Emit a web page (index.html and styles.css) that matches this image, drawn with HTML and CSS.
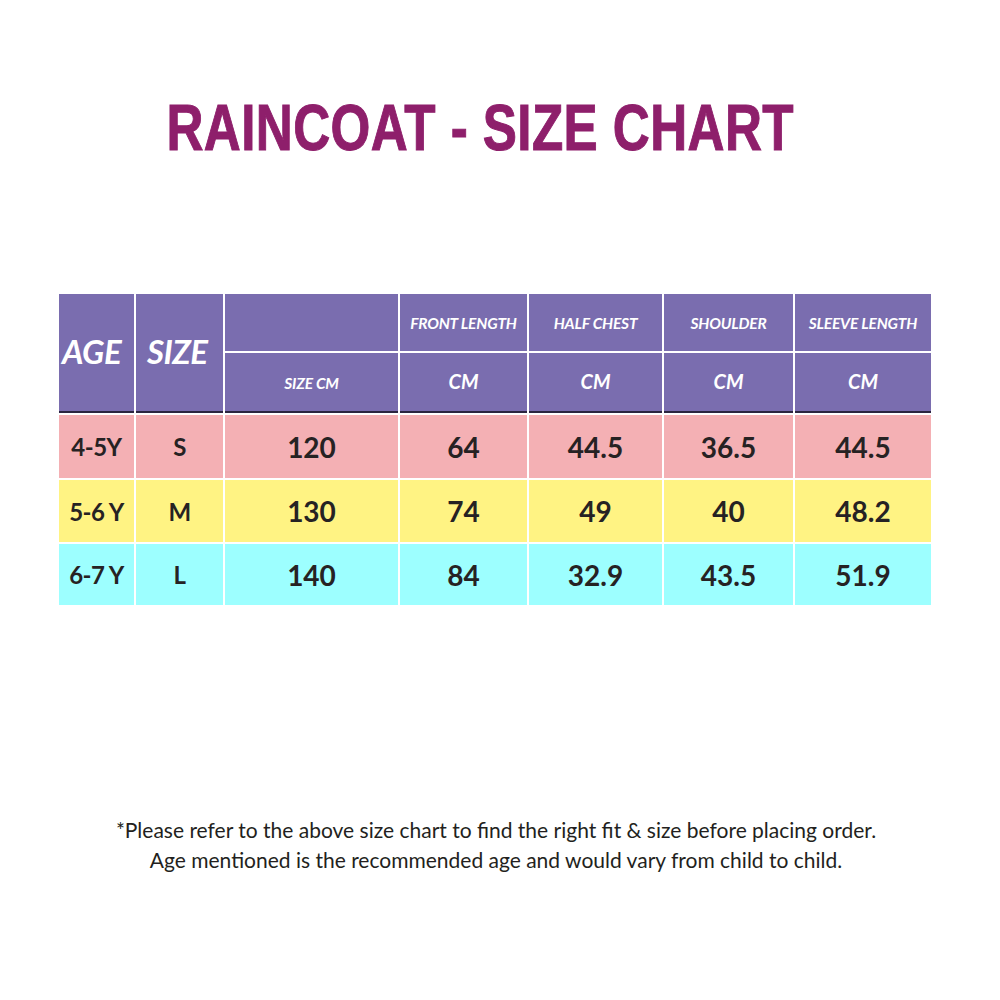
FILE: index.html
```html
<!DOCTYPE html>
<html lang="en">
<head>
<meta charset="utf-8">
<title>Raincoat - Size Chart</title>
<link rel="stylesheet" href="styles.css">
</head>
<body>
<main class="page">
  <header class="title-wrap">
    <h1 class="title">RAINCOAT - SIZE CHART</h1>
  </header>

  <section class="chart">
    <div class="cell head big span2 c1">AGE</div>
    <div class="cell head big span2 c2">SIZE</div>
    <div class="cell head c3"></div>
    <div class="cell head small">FRONT LENGTH</div>
    <div class="cell head small">HALF CHEST</div>
    <div class="cell head small">SHOULDER</div>
    <div class="cell head small">SLEEVE LENGTH</div>

    <div class="cell head sub small c3">SIZE CM</div>
    <div class="cell head sub unit">CM</div>
    <div class="cell head sub unit">CM</div>
    <div class="cell head sub unit">CM</div>
    <div class="cell head sub unit">CM</div>

    <div class="cell pink label">4-5Y</div>
    <div class="cell pink label">S</div>
    <div class="cell pink">120</div>
    <div class="cell pink">64</div>
    <div class="cell pink">44.5</div>
    <div class="cell pink">36.5</div>
    <div class="cell pink">44.5</div>

    <div class="cell yellow label">5-6 Y</div>
    <div class="cell yellow label">M</div>
    <div class="cell yellow">130</div>
    <div class="cell yellow">74</div>
    <div class="cell yellow">49</div>
    <div class="cell yellow">40</div>
    <div class="cell yellow">48.2</div>

    <div class="cell cyan label">6-7 Y</div>
    <div class="cell cyan label">L</div>
    <div class="cell cyan">140</div>
    <div class="cell cyan">84</div>
    <div class="cell cyan">32.9</div>
    <div class="cell cyan">43.5</div>
    <div class="cell cyan">51.9</div>
  </section>

  <footer class="note">
    <p>*Please refer to the above size chart to find the right fit &amp; size before placing order.</p>
    <p>Age mentioned is the recommended age and would vary from child to child.</p>
  </footer>
</main>
</body>
</html>
```

FILE: styles.css
```css
html, body {
  margin: 0;
  padding: 0;
  background: #ffffff;
}

.page {
  width: 1000px;
  height: 1000px;
  position: relative;
  overflow: hidden;
  font-family: "Lato", "Open Sans", sans-serif;
  color: #231f20;
}

.title-wrap {
  display: flex;
  justify-content: center;
  padding-top: 92px;
  padding-right: 39px;
}

.title {
  margin: 0;
  font-family: "Liberation Sans", Arial, sans-serif;
  font-weight: 700;
  font-size: 64px;
  line-height: 72px;
  color: #8e1f6b;
  white-space: nowrap;
  transform: scaleX(0.8);
  transform-origin: center;
  letter-spacing: 0.5px;
  -webkit-text-stroke: 1px #8e1f6b;
}

.chart {
  display: grid;
  grid-template-columns: 75px 87px 173px 127px 133px 129px 136px;
  grid-template-rows: 57px 60px 63px 62px 61px;
  gap: 2px;
  margin: 130px 0 0 59px;
  width: 872px;
  background: #ffffff;
}

.cell {
  display: flex;
  align-items: center;
  justify-content: center;
  font-weight: 700;
  font-size: 28px;
  color: #262223;
}

.head {
  background: #7a6daf;
  color: #ffffff;
  font-style: italic;
}

.span2 {
  grid-row: span 2;
  border-bottom: 2px solid #2b2540;
}

.sub {
  border-bottom: 2px solid #2b2540;
}

.big {
  font-size: 33px;
  letter-spacing: -0.5px;
  justify-content: flex-start;
  padding-left: 3px;
  padding-bottom: 4px;
}

.c2.big {
  padding-left: 11px;
}

.small {
  font-size: 15.5px;
  letter-spacing: -0.2px;
}

.sub.small {
  font-size: 15.5px;
  padding-top: 2px;
}

.unit {
  font-size: 20px;
  padding-bottom: 2px;
}

.label {
  font-size: 24px;
  letter-spacing: -0.5px;
}

.pink { background: #f4b0b4; }
.yellow { background: #fff383; }
.cyan { background: #9dffff; }

.note {
  margin-top: 210px;
  text-align: center;
  font-size: 21px;
  line-height: 30px;
  color: #231f20;
  padding-right: 8px;
}

.note p {
  margin: 0;
}
```
